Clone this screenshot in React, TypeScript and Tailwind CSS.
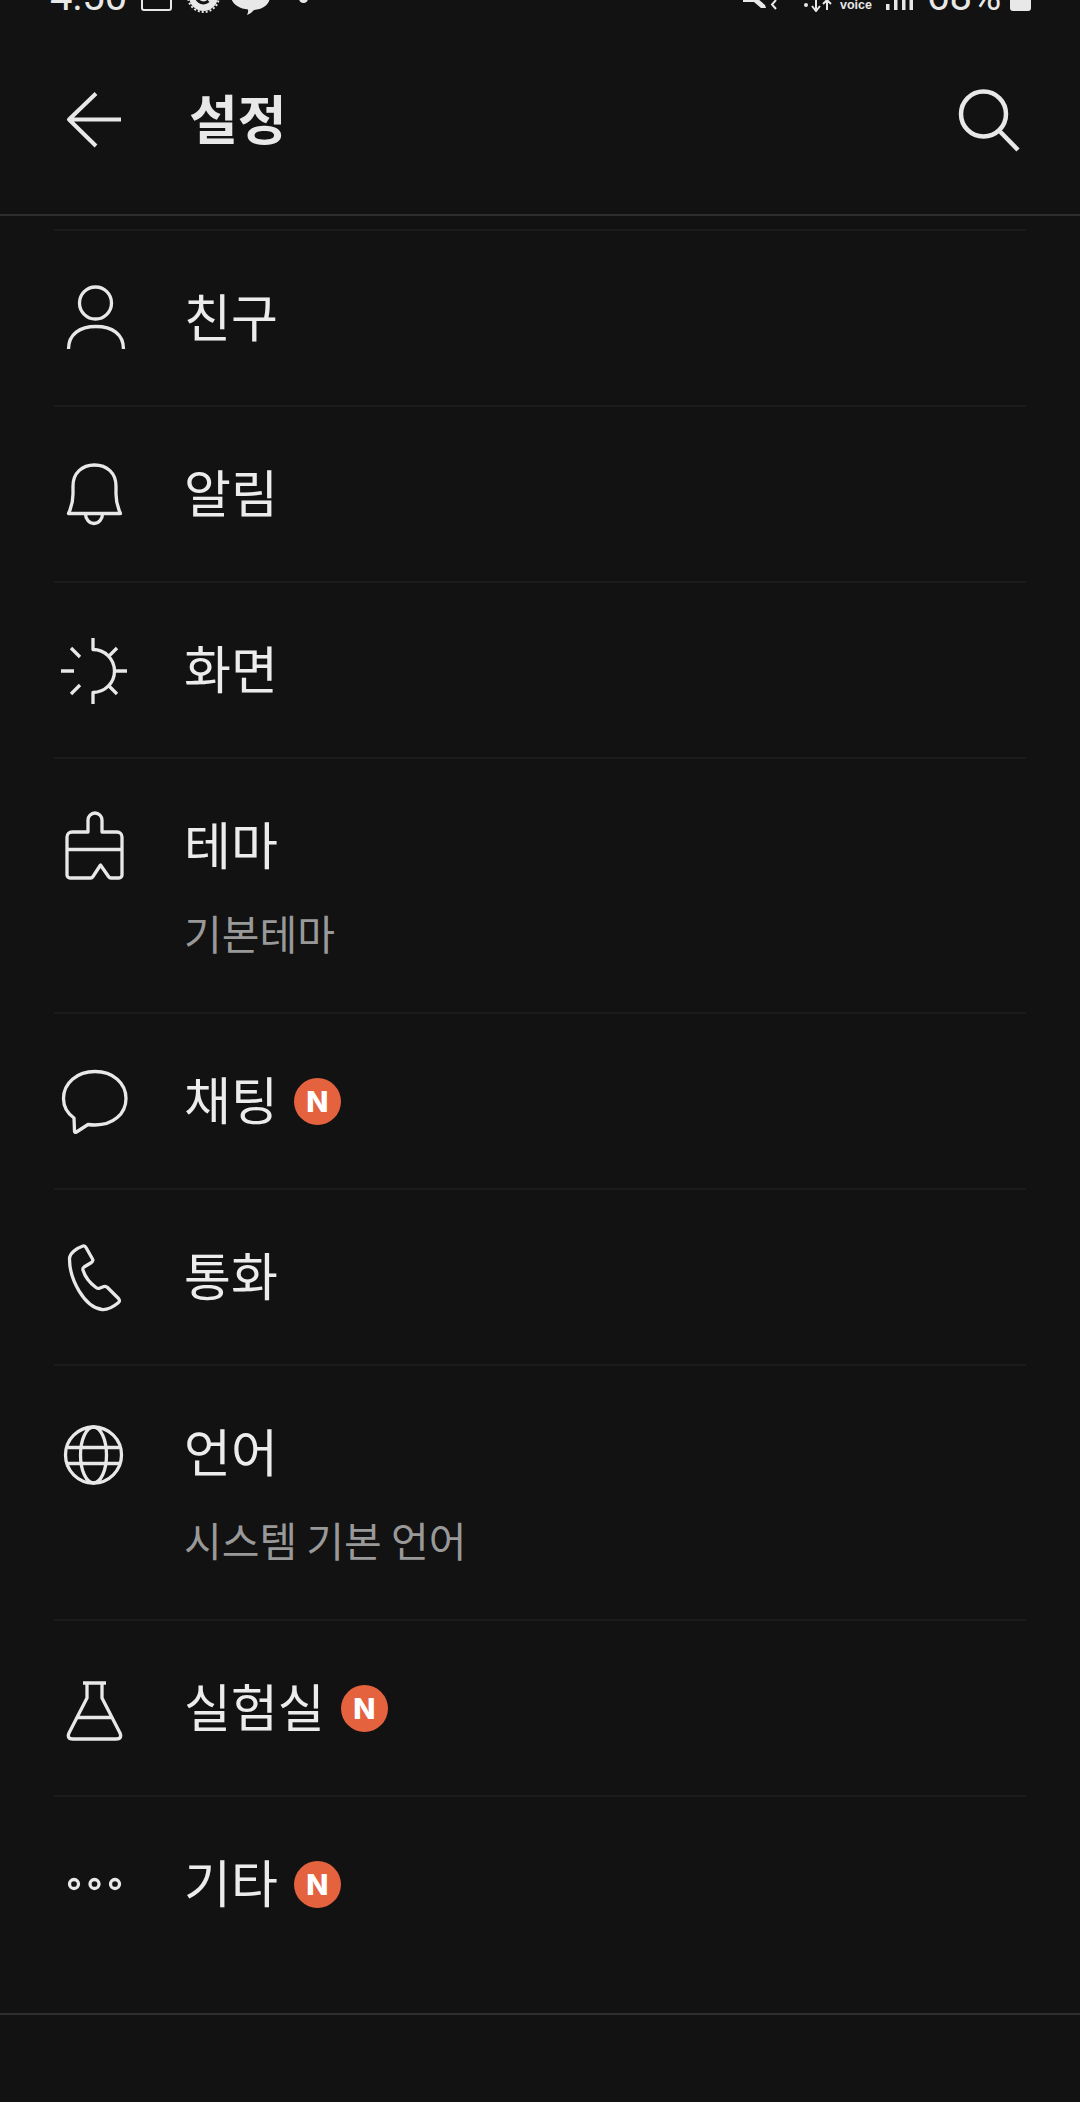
const bodyFont = "font-['Noto_Sans_CJK_KR','Noto_Sans',sans-serif]";

function Icon({ children }: { children: React.ReactNode }) {
  return (
    <svg
      width="80"
      height="80"
      viewBox="0 0 80 80"
      fill="none"
      stroke="#e8e8e8"
      strokeWidth="3.3"
      strokeLinecap="butt"
      strokeLinejoin="round"
      className="shrink-0"
    >
      {children}
    </svg>
  );
}

const person = (
  <>
    <circle cx="40.5" cy="25" r="16" />
    <path d="M13.5 71C13.5 56 25 48.5 41 48.5C57 48.5 68.5 56 68.5 71" />
  </>
);
const bell = (
  <>
    <path d="M13.5 59.5H65.5C62 52 61 47 61 40V32C61 19 52 11 39.5 11C27 11 18 19 18 32V40C18 47 17 52 13.5 59.5Z" />
    <path d="M30.5 60A8.5 9.5 0 0 0 47.5 60" />
  </>
);
const sun = (
  <path d="M38 8V19.5A21.5 21.5 0 0 1 38 62.5V74M6 41H19M60 41H72M53 27L62 18M53 55L62 64M16 18L25 27M25 55L16 64" />
);
const brush = (
  <>
    <path d="M33 26V14A7 7 0 0 1 47 14V26H62A5 5 0 0 1 67 31V69A3 3 0 0 1 64 72H56Q54.5 72 53.5 70.5L45.5 59L38 70.5Q37 72 35.5 72H15A3 3 0 0 1 12 69V31A5 5 0 0 1 17 26Z" />
    <path d="M12 43.5H67" />
  </>
);
const chat = (
  <path d="M19 57C12 52 8.5 45 8.5 37.5C8.5 22 22 10.5 40 10.5C58 10.5 71 22 71 37.5C71 53 58 64 40 64C37.5 64 35 63.8 33 63.5L21.5 71Q19.5 72 19.5 70Z" />
);
const phone = (
  <path d="M14.5 22C14.5 16 22 11 28 9Q30 8.5 31 10.5L37.5 22Q38.5 24 36.5 25.5L29 30Q27.5 31 28 33C30 40 35 46 41 50.5Q43 52 45 51L49 49.5Q51 49 52.5 50.5L63.5 61.5Q65.5 64 63 66C58 70 52 73 47 72.5C29 70 14.5 42 14.5 22Z" />
);
const globe = (
  <>
    <ellipse cx="38.5" cy="42" rx="28" ry="28" />
    <ellipse cx="38.5" cy="42" rx="13" ry="28" />
    <path d="M13 34.5H64M13 50.5H64" />
  </>
);
const flask = (
  <path d="M28 15H51M32 15V30L14 65Q11.5 71 18 71H61Q67.5 71 65 65L47 30V15M22.5 49.5H56.5" />
);
const dots = (
  <>
    <circle cx="19" cy="40" r="4.5" />
    <circle cx="39.5" cy="40" r="4.5" />
    <circle cx="60" cy="40" r="4.5" />
  </>
);

function Badge() {
  return (
    <span className="ml-[16px] flex h-[47px] w-[47px] shrink-0 items-center justify-center rounded-full bg-[#e5623f] font-['Inter',sans-serif] text-[29px] font-extrabold leading-none text-white">
      N
    </span>
  );
}

function Row({
  icon,
  label,
  sub,
  badge,
}: {
  icon: React.ReactNode;
  label: string;
  sub?: string;
  badge?: boolean;
}) {
  return (
    <div className="mx-[54px] border-t-2 border-[#1b1b1b]">
      <div className="flex h-[174px] items-center pl-[1px]">
        <Icon>{icon}</Icon>
        <span className="mb-[6px] ml-[49px] text-[51px] font-normal leading-none text-[#ececec]">{label}</span>
        {badge && <Badge />}
      </div>
      {sub && (
        <div className="-mt-[42px] h-[121px] pl-[130px] text-[41px] leading-[82px] text-[#999999]">
          {sub}
        </div>
      )}
    </div>
  );
}

function StatusBar() {
  return (
    <div className="flex h-[16px] items-end justify-between overflow-hidden pl-[50px] pr-[49px] text-[#e8e8e8]">
      <div className="flex items-end">
        <span className="-mb-[1px] w-[91px] font-['Roboto',sans-serif] text-[40px] leading-[40px]">4:50</span>
        <span className="mb-[5px] h-[30px] w-[31px] rounded-[3px] border-2 border-[#e8e8e8]" />
        <svg width="33" height="33" viewBox="0 0 33 33" className="mb-[3px] ml-[15px]">
          <circle cx="16.5" cy="16.5" r="14.5" fill="#e8e8e8" />
          <circle cx="16.5" cy="16.5" r="15.5" fill="none" stroke="#e8e8e8" strokeWidth="2" strokeDasharray="2 2" />
          <path d="M21.5 21A7.5 7.5 0 1 1 24 15H17" fill="none" stroke="#121212" strokeWidth="3" />
        </svg>
        <svg width="39" height="34" viewBox="0 0 39 34" className="mb-[1px] ml-[11px]">
          <path d="M19.5 0C30 0 39 6 39 15C39 23 33 28 23 29C21 31 19 33 16 34C17 32 17.5 30 17 28.5C7 27.5 0 22 0 15C0 6 9 0 19.5 0Z" fill="#e8e8e8" />
        </svg>
        <span className="mb-[13px] ml-[29px] h-[9px] w-[9px] rounded-full bg-[#e8e8e8]" />
      </div>
      <div className="flex items-end">
        <svg width="36" height="12" viewBox="0 0 36 12" className="mb-[6px]">
          <path d="M0 0H14L22 7L23 10H18L11 4H0Z" fill="#e8e8e8" />
          <path d="M33 2L29 6.5L33 11" stroke="#e8e8e8" strokeWidth="2" fill="none" />
        </svg>
        <svg width="34" height="12" viewBox="0 0 34 12" className="mb-[4px] ml-[23px]">
          <circle cx="4" cy="5" r="2" fill="#e8e8e8" />
          <path d="M14 0V10M10 6L14 11L18 6M25 10V1M21 4L25 0L29 4" stroke="#e8e8e8" strokeWidth="2" fill="none" />
        </svg>
        <span className="mb-[4px] ml-[4px] w-[32px] font-['Liberation_Sans',sans-serif] text-[12.5px] font-bold leading-[13px]">voice</span>
        <svg width="27" height="10" viewBox="0 0 27 10" className="mb-[6px] ml-[14px]">
          <path d="M0 4H3.5V10H0ZM8 0H11.5V10H8ZM16 0H19.5V10H16ZM23.5 0H27V10H23.5Z" fill="#e8e8e8" />
        </svg>
        <span className="-mb-[1px] ml-[14px] w-[75px] font-['Roboto',sans-serif] text-[40px] leading-[40px]">68%</span>
        <span className="mb-[5px] ml-[8px] h-[30px] w-[21px] rounded-[3px] bg-[#e8e8e8]" />
      </div>
    </div>
  );
}

export default function App() {
  return (
    <div className={`min-h-[2102px] w-[1080px] overflow-hidden bg-[#121212] ${bodyFont}`}>
      <StatusBar />
      <header className="mb-[54px] mt-[64px] flex h-[80px] items-center justify-between pl-[55px] pr-[50px]">
        <div className="flex items-center">
          <Icon>
            <path d="M66 39.5H14M41 13.5L14 39.5L41 66" strokeWidth="4" />
          </Icon>
          <h1 className="mb-[6px] ml-[54px] text-[53px] font-bold leading-none text-[#e8e8e8]">설정</h1>
        </div>
        <Icon>
          <circle cx="33.5" cy="34" r="22.5" strokeWidth="4.5" />
          <path d="M50 51.5L68 70" strokeWidth="4.5" />
        </Icon>
      </header>
      <div className="h-[2px] bg-[#2e2e2e]" />
      <main className="pb-[42px] pt-[13px]">
        <Row icon={person} label="친구" />
        <Row icon={bell} label="알림" />
        <Row icon={sun} label="화면" />
        <Row icon={brush} label="테마" sub="기본테마" />
        <Row icon={chat} label="채팅" badge />
        <Row icon={phone} label="통화" />
        <Row icon={globe} label="언어" sub="시스템 기본 언어" />
        <Row icon={flask} label="실험실" badge />
        <Row icon={dots} label="기타" badge />
      </main>
      <div className="h-[2px] bg-[#2e2e2e]" />
    </div>
  );
}
